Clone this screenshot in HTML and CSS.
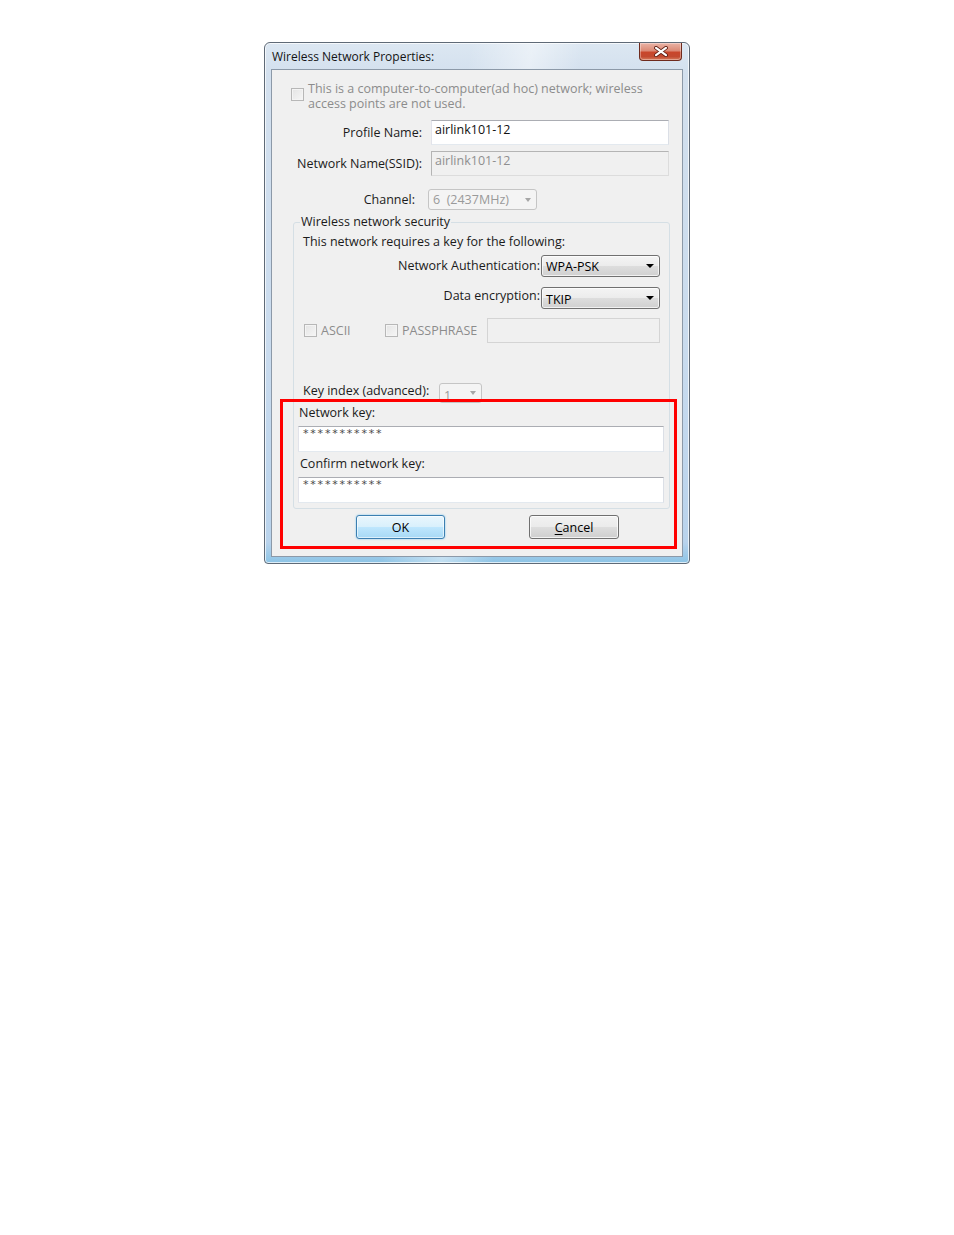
FILE: index.html
```html
<!DOCTYPE html>
<html>
<head>
<meta charset="utf-8">
<title>Wireless Network Properties</title>
<link rel="stylesheet" href="styles.css">
</head>
<body>
<div class="window">
  <div class="titlebar">
    <span class="title">Wireless Network Properties:</span>
    <div class="close">
      <svg width="16" height="11" viewBox="0 0 16 11">
        <path d="M3 1.8 L13 9.2 M13 1.8 L3 9.2" stroke="#5a1a10" stroke-width="3.8" stroke-linecap="round" fill="none"/>
        <path d="M3 1.8 L13 9.2 M13 1.8 L3 9.2" stroke="#ffffff" stroke-width="2.2" stroke-linecap="round" fill="none"/>
      </svg>
    </div>
  </div>
  <div class="client">
    <div class="adhoc">
      <span class="check disabled"></span>
      <span class="adhoc-text">This is a computer-to-computer(ad hoc) network; wireless<br>access points are not used.</span>
    </div>

    <div class="field profile">
      <span class="flabel">Profile Name:</span>
      <div class="textbox wide">airlink101-12</div>
    </div>
    <div class="field ssid">
      <span class="flabel">Network Name(SSID):</span>
      <div class="textbox wide disabled">airlink101-12</div>
    </div>
    <div class="field channel">
      <span class="flabel ch">Channel:</span>
      <div class="combo disabled ch-combo"><span class="combo-val">6  (2437MHz)</span><span class="arrow"></span></div>
    </div>

    <fieldset class="group">
      <legend>Wireless network security</legend>
      <div class="req">This network requires a key for the following:</div>
      <div class="sel-row auth">
        <span>Network Authentication:</span>
        <div class="combo enabled"><span class="combo-val">WPA-PSK</span><span class="arrow"></span></div>
      </div>
      <div class="sel-row enc">
        <span>Data encryption:</span>
        <div class="combo enabled"><span class="combo-val">TKIP</span><span class="arrow"></span></div>
      </div>
      <div class="keytype">
        <div class="opt ascii"><span class="check disabled"></span><span class="opt-label">ASCII</span></div>
        <div class="opt pass"><span class="check disabled"></span><span class="opt-label">PASSPHRASE</span></div>
        <div class="textbox disabled light phrase"></div>
      </div>
      <div class="keyidx">
        <span class="ki-label">Key index (advanced):</span>
        <div class="combo disabled ki-combo"><span class="combo-val">1</span><span class="arrow"></span></div>
      </div>
      <div class="nk-label">Network key:</div>
      <div class="textbox key">***********</div>
      <div class="ck-label">Confirm network key:</div>
      <div class="textbox key">***********</div>
    </fieldset>

    <div class="buttons">
      <div class="btn default">OK</div>
      <div class="btn"><u>C</u>ancel</div>
    </div>
  </div>
  <div class="annotation"></div>
</div>
</body>
</html>
```

FILE: styles.css
```css
* { box-sizing: border-box; }
html, body { margin: 0; padding: 0; background: #ffffff; }
body {
  font-family: "Open Sans", "Noto Sans", "DejaVu Sans", sans-serif;
  font-size: 12.5px;
  color: #1b1b1b;
}

.window {
  position: relative;
  margin: 42px 0 0 264px;
  width: 426px;
  height: 522px;
  border: 1px solid #5f6a77;
  border-radius: 6px 6px 4px 4px;
  padding: 0 6px 6px 6px;
  display: flex;
  flex-direction: column;
  background:
    linear-gradient(100deg, rgba(255,255,255,0) 40%, rgba(255,255,255,0.45) 52%, rgba(255,255,255,0) 62%),
    linear-gradient(180deg, #dce7f2 0%, #d3e0ee 6%, #c9dbee 60%, #b9d3ec 96%, #8cc4e6 100%);
  box-shadow: inset 0 0 0 1px rgba(255,255,255,0.7);
}

.titlebar {
  height: 26px;
  display: flex;
  align-items: flex-start;
}
.title {
  padding-left: 1px;
  line-height: 27px;
  font-size: 12px;
  color: #141414;
}
.close {
  margin-left: auto;
  margin-right: 1px;
  width: 43px;
  height: 18px;
  border: 1px solid #6e2a1d;
  border-top: none;
  border-radius: 0 0 4px 4px;
  background: linear-gradient(180deg, #eab3a6 0%, #db8a76 45%, #c9462b 55%, #c24a30 80%, #d77b5c 100%);
  box-shadow: inset 0 0 0 1px rgba(255,255,255,0.35);
  display: flex;
  align-items: center;
  justify-content: center;
}

.client {
  flex: 1;
  border: 1px solid #8c99a8;
  background: #f0f0f0;
  display: flex;
  flex-direction: column;
}

/* checkbox */
.check {
  display: inline-block;
  flex: none;
  width: 13px;
  height: 13px;
  border: 1px solid #b7b7b7;
  background: linear-gradient(135deg, #e4e4e4 0%, #f6f6f6 100%);
  box-shadow: inset 0 0 0 1px #f4f4f4;
}

.adhoc {
  margin-top: 11px;
  padding-left: 19px;
  display: flex;
  align-items: flex-start;
}
.adhoc .check { margin-top: 7px; }
.adhoc-text {
  margin-left: 4px;
  line-height: 15px;
  color: #8c8c8c;
}

/* label + field rows */
.field {
  display: flex;
  align-items: center;
}
.flabel {
  width: 150px;
  text-align: right;
  margin-right: 9px;
}
.flabel.ch { width: 143px; margin-right: 13px; }
.profile { margin-top: 9px; }
.ssid { margin-top: 6px; }
.channel { margin-top: 13px; }

.textbox {
  height: 25px;
  border: 1px solid #abadb3;
  border-right-color: #dbdfe6;
  border-bottom-color: #e3e9ef;
  border-left-color: #e2e3ea;
  background: #ffffff;
  padding: 0 3px;
  line-height: 17px;
  color: #111;
}
.textbox.wide { width: 238px; }
.textbox.disabled {
  background: #f0f0f0;
  border: 1px solid #b4b4b4;
  border-right-color: #dcdcdc;
  border-bottom-color: #dcdcdc;
  color: #8f8f8f;
}
.textbox.light {
  border-color: #d4d4d4;
}

/* combo boxes */
.combo {
  position: relative;
  display: flex;
  align-items: center;
  border-radius: 3px;
  padding-left: 4px;
}
.combo-val { white-space: pre; }
.combo .arrow {
  margin-left: auto;
  margin-right: 5px;
  width: 0;
  height: 0;
  border-left: 4px solid transparent;
  border-right: 4px solid transparent;
  border-top: 4px solid #000;
}
.combo.enabled {
  width: 119px;
  height: 22px;
  border: 1px solid #707070;
  background: linear-gradient(180deg, #f4f4f4 0%, #ececec 48%, #dddddd 52%, #d0d0d0 100%);
  box-shadow: inset 0 0 0 1px rgba(255,255,255,0.7);
  color: #000;
}
.combo.disabled {
  border: 1px solid #c5c5c5;
  background: #f4f4f4;
  color: #9a9a9a;
}
.combo.disabled .arrow { border-top-color: #a6a6a6; border-left-width: 3.5px; border-right-width: 3.5px; }
.ch-combo { width: 109px; height: 21px; }
.ki-combo { width: 43px; height: 20px; }
.ki-combo .combo-val { margin-top: 4px; }

/* group box */
.group {
  margin: 5px 0 0 21px;
  padding: 0 0 5px 0;
  width: 377px;
  min-width: 0;
  border: 1px solid #d5dfe5;
  border-radius: 3px;
}
.group legend {
  margin-left: 6px;
  padding: 0 1px;
  line-height: 14px;
  color: #1b1b1b;
}
.req {
  margin: 6px 0 0 9px;
  line-height: 14px;
}
.sel-row {
  display: flex;
  align-items: center;
  justify-content: flex-end;
  padding-right: 9px;
}
.sel-row span { margin-right: 1px; }
.auth { margin-top: 6px; }
.auth > span { margin-top: -2px; }
.enc { margin-top: 10px; }
.enc > span { margin-top: -5px; }
.enc .combo-val { margin-top: 3px; }

.keytype {
  margin-top: 9px;
  padding-left: 10px;
  display: flex;
  align-items: center;
  height: 25px;
}
.opt { display: flex; align-items: center; color: #8c8c8c; }
.opt-label { margin-left: 4px; }
.opt.ascii { width: 81px; }
.opt.pass { width: 102px; }
.phrase { width: 173px; height: 25px; }

.keyidx {
  margin-top: 40px;
  padding-left: 9px;
  display: flex;
  align-items: flex-start;
}
.ki-label { width: 136px; line-height: 16px; }

.nk-label {
  margin: 3px 0 0 5px;
  line-height: 14px;
}
.ck-label {
  margin: 5px 0 0 6px;
  line-height: 14px;
}
.textbox.key {
  margin: 6px 5px 0 4px;
  height: 26px;
  padding: 0 4px;
  line-height: 13px;
  font-family: "DejaVu Sans", sans-serif;
  font-size: 11px;
  letter-spacing: 1.8px;
  color: #4a4a4a;
}

/* buttons */
.buttons {
  margin-top: 6px;
  padding-left: 84px;
  display: flex;
  gap: 84px;
}
.btn {
  width: 90px;
  height: 24px;
  border: 1px solid #707070;
  border-radius: 3px;
  background: linear-gradient(180deg, #f2f2f2 0%, #ebebeb 48%, #dddddd 52%, #cfcfcf 100%);
  box-shadow: inset 0 0 0 1px rgba(255,255,255,0.75);
  display: flex;
  align-items: center;
  justify-content: center;
  color: #000;
}
.btn u { text-decoration: underline; text-underline-offset: 2px; }
.btn.default {
  width: 89px;
  border-color: #3c7fb1;
  background: linear-gradient(180deg, #eaf6fd 0%, #d9f0fc 48%, #bee6fd 52%, #a7d9f5 100%);
  box-shadow: inset 0 0 0 1px rgba(255,255,255,0.6), 0 0 2px #6fc3f0;
}

/* red annotation frame drawn over the dialog */
.annotation {
  position: absolute;
  left: 15px;
  top: 356px;
  width: 397px;
  height: 150px;
  border: 3px solid #ff0000;
  pointer-events: none;
}
```
